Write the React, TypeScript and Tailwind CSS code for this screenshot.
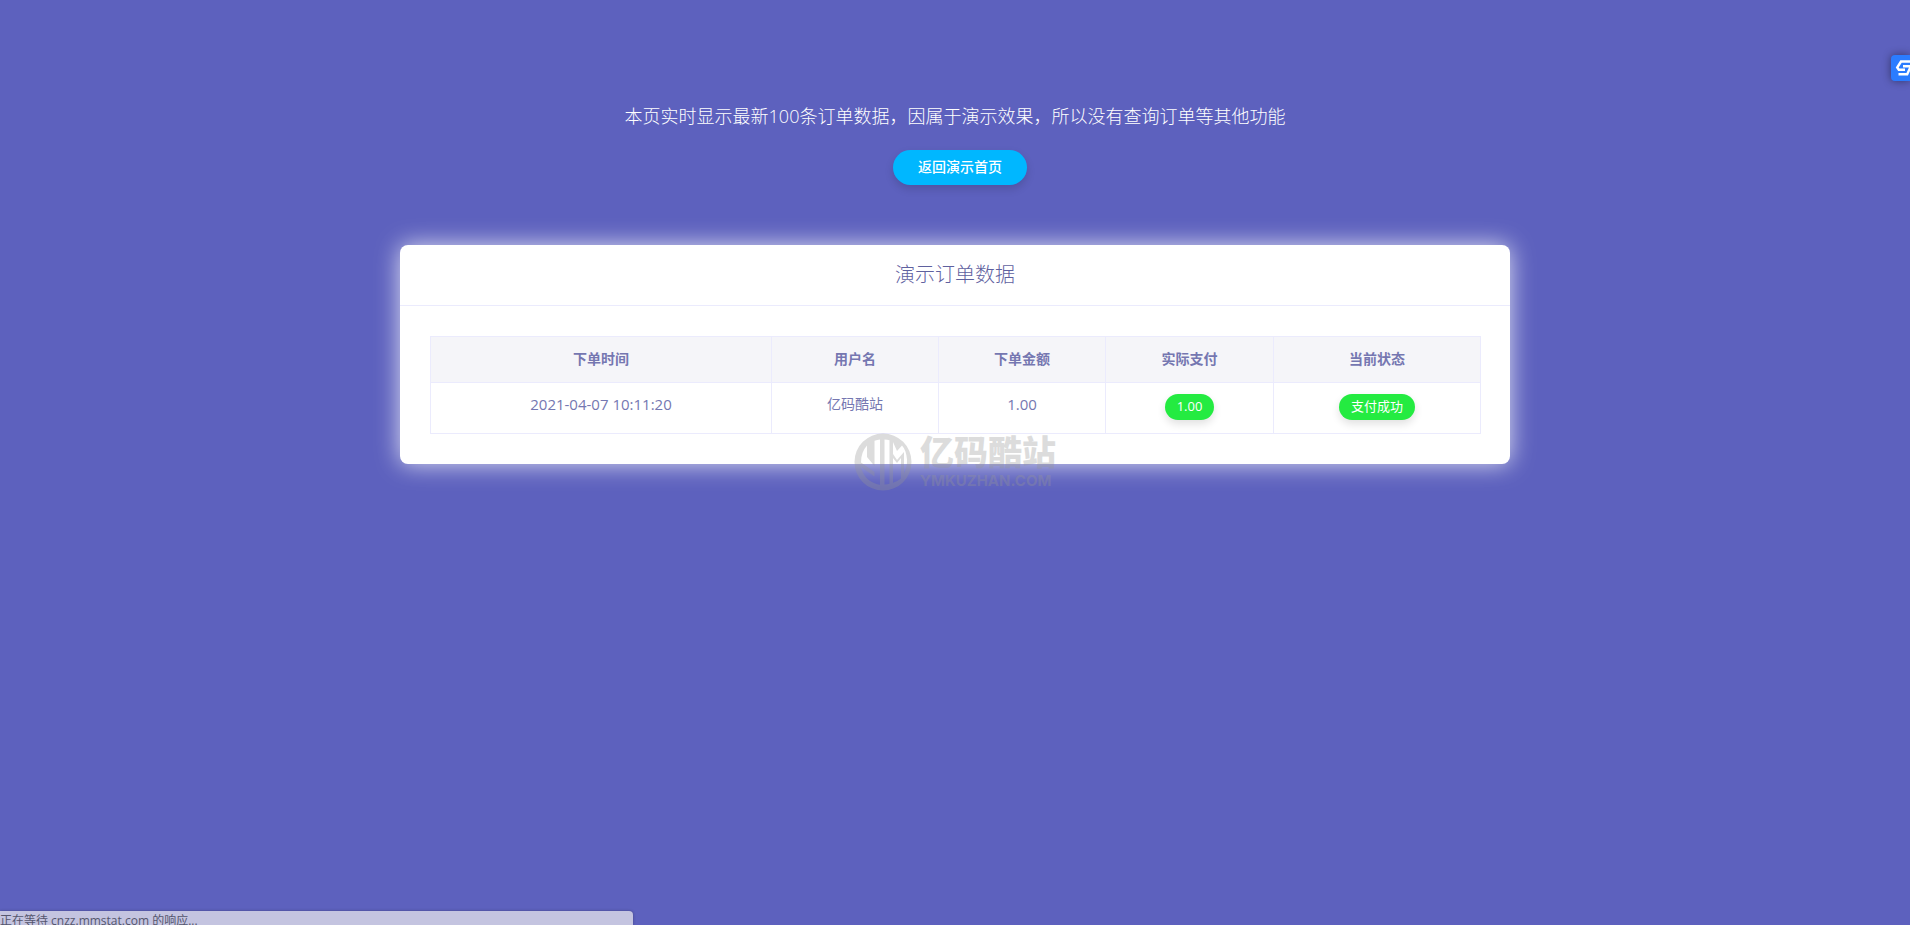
import React from "react";

const columns = [
  { label: "下单时间", width: "w-[341px]" },
  { label: "用户名", width: "w-[167px]" },
  { label: "下单金额", width: "w-[167px]" },
  { label: "实际支付", width: "w-[168px]" },
  { label: "当前状态", width: "w-[207px]" },
];

const orders = [
  {
    time: "2021-04-07 10:11:20",
    user: "亿码酷站",
    amount: "1.00",
    paid: "1.00",
    status: "支付成功",
  },
];

const Badge = ({ children }: { children: React.ReactNode }) => (
  <span className="inline-block rounded-full bg-[#24eb41] px-3 pb-[2px] text-[13px] leading-6 text-white shadow-[0_4px_8px_rgba(0,0,0,0.12)]">
    {children}
  </span>
);

const Hero = () => (
  <header className="flex flex-col items-center px-4 pt-[102px] text-center text-white">
    <p className="text-lg leading-7 font-light">
      本页实时显示最新100条订单数据，因属于演示效果，所以没有查询订单等其他功能
    </p>
    <a
      href="#"
      className="mt-5 ml-[10px] rounded-full bg-[#00b7ff] px-[25px] pb-[2px] text-sm leading-[33px] font-medium shadow-[0_4px_9px_rgba(0,0,0,0.15)]"
    >
      返回演示首页
    </a>
  </header>
);

const OrderTable = () => (
  <table className="w-full table-fixed border-collapse text-center text-[#7577b1]">
    <thead>
      <tr className="h-[46px] bg-[#f5f5f9]">
        {columns.map((column) => (
          <th
            key={column.label}
            className={`${column.width} border border-[#ebebfd] pb-[2px] text-sm font-bold`}
          >
            {column.label}
          </th>
        ))}
      </tr>
    </thead>
    <tbody>
      {orders.map((order) => (
        <tr key={order.time} className="h-[51px] align-top">
          <td className="border border-[#ebebfd] pt-[11px] text-[15px] leading-5">{order.time}</td>
          <td className="border border-[#ebebfd] pt-[11px] text-sm">{order.user}</td>
          <td className="border border-[#ebebfd] pt-[11px] text-[15px] leading-5">{order.amount}</td>
          <td className="border border-[#ebebfd] pt-[11px] leading-none">
            <Badge>{order.paid}</Badge>
          </td>
          <td className="border border-[#ebebfd] pt-[11px] leading-none">
            <Badge>{order.status}</Badge>
          </td>
        </tr>
      ))}
    </tbody>
  </table>
);

const Watermark = () => (
  <div className="pointer-events-none absolute top-[188px] left-1/2 flex -translate-x-1/2 items-center gap-2 text-[#969696] opacity-[0.33]">
    <svg width="58" height="58" viewBox="0 0 58 58" fill="currentColor">
      <path
        fillRule="evenodd"
        d="M29 0.500a28.500 28.500 0 1 0 0 57 28.500 28.500 0 0 0 0-57z
          M26 6.500v45.300a23 23 0 0 1-5.500-1.500V7.800A23 23 0 0 1 26 6.500z
          M13 12.500V24l7.500 9v6L7 29.500c0-7 2-12.500 6-17z
          M7 34l13.500 9.500v6.800C13.500 47.500 8.500 41.500 7 34z
          M30.500 6.500c2 .1 3.700.4 5 .8v43.400c-1.500.5-3.200.8-5 .9z
          M39 25l4 5 4-5v20.500a22 22 0 0 1-8 4.200z
          M39 9l4 9 5-5.500c3 3.300 4.500 8 5 14 .3 5-1 10-3 14V19l-7 8-4-6z"
      />
    </svg>
    <div className="flex flex-col whitespace-nowrap">
      <span className="text-[34px] leading-9 font-black">亿码酷站</span>
      <span className="pt-[2px] font-[Inter] text-[15px] leading-[18px] font-bold">
        YMKUZHAN.COM
      </span>
    </div>
  </div>
);

const SideButton = () => (
  <button
    aria-label="S"
    className="absolute top-[55px] right-0 flex h-[26px] w-[19px] items-center overflow-hidden rounded-l bg-[#2b7cff] pl-1 shadow-[0_0_8px_rgba(0,0,0,0.45)]"
  >
    <svg
      width="20"
      height="18"
      viewBox="0 0 20 18"
      fill="none"
      stroke="#fff"
      strokeWidth="2.4"
      className="shrink-0"
    >
      <path d="M15.500 2.500H6L2.200 8.500l1.600 2.300H10" />
      <path d="M8 7.300h7.800l-3.600 8H3.500" />
    </svg>
  </button>
);

export default function App() {
  return (
    <div className="relative min-h-screen overflow-hidden bg-[#5d61be] font-['Open_Sans','Noto_Sans_CJK_SC',sans-serif]">
      <Hero />
      <main className="relative mx-auto mt-[60px] max-w-[1110px]">
        <section className="rounded-lg bg-white shadow-[0_0_25px_rgba(255,255,255,0.8)]">
          <h1 className="border-b border-[#ebebfd] py-4 text-center text-xl font-light text-[#5f619f]">
            演示订单数据
          </h1>
          <div className="p-[30px]">
            <OrderTable />
          </div>
        </section>
        <Watermark />
      </main>
      <SideButton />
      <div className="absolute bottom-0 left-0 h-[14px] w-[633px] overflow-hidden rounded-tr bg-[#c4c4e0] text-xs leading-5 text-[#55566e] shadow-[0_0_3px_rgba(0,0,0,0.3)]">
        正在等待 cnzz.mmstat.com 的响应...
      </div>
    </div>
  );
}
